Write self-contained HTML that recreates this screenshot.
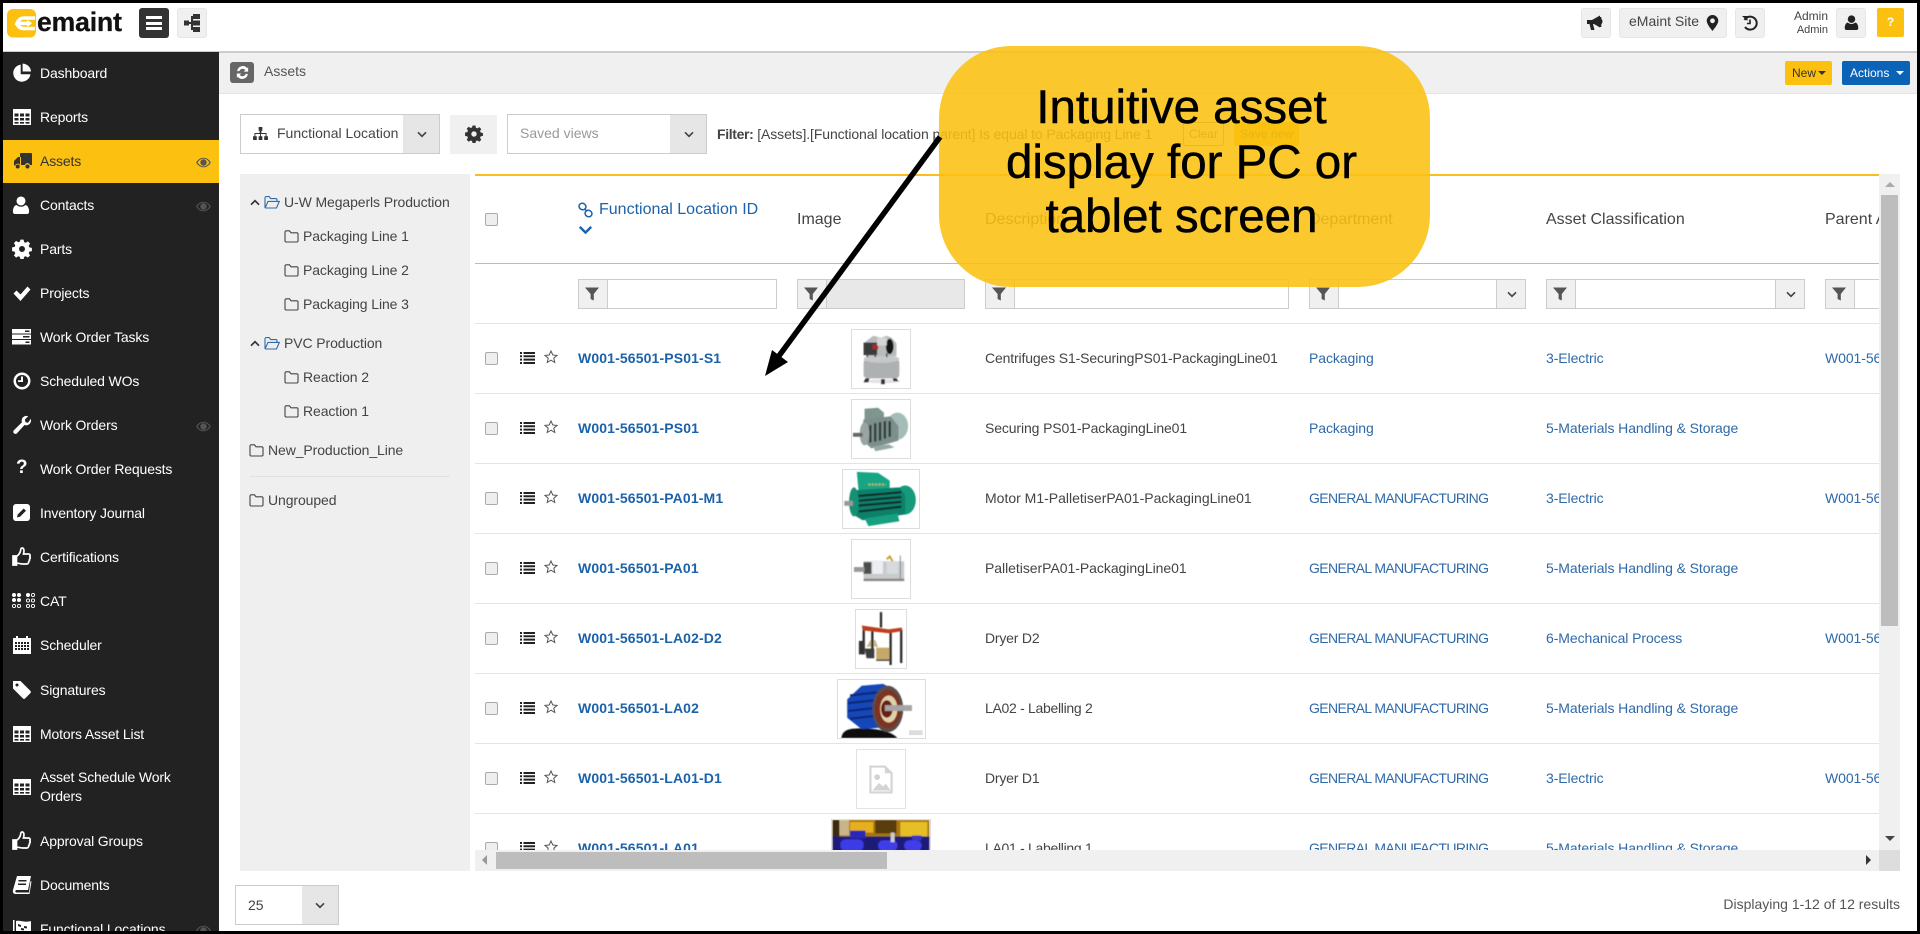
<!DOCTYPE html>
<html lang="en"><head><meta charset="utf-8"><title>Assets</title>
<style>
*{box-sizing:border-box}
html,body{margin:0;padding:0;width:1920px;height:934px;overflow:hidden;background:#fff;font-family:"Liberation Sans",sans-serif}
#p{position:relative;width:1920px;height:934px;overflow:hidden;background:#fff;color:#444;font-size:14px}
.a,.t,svg.i{position:absolute}
.t{white-space:nowrap;line-height:20px}
#side{position:absolute;left:3px;top:52px;width:216px;height:880px;background:#222;overflow:hidden}
.m{position:absolute;left:37px;color:#fff;line-height:20px;white-space:nowrap;letter-spacing:-.15px}
.mi{position:absolute;left:9px;width:20px;height:20px;color:#fff}
.eye{position:absolute;left:193px;width:15px;height:11px;color:#666}
.btn{position:absolute;top:8px;height:30px;background:#f0f0f0;border:1px solid #e6e6e6;border-radius:3px}
.sel{position:absolute;background:#fff;border:1px solid #ccc}
.sel b{position:absolute;right:0;top:0;bottom:0;width:36px;background:#e6e6e6}
.chev{position:absolute;width:10px;height:7px;color:#444}
.tree{color:#444;letter-spacing:-.1px}
.fo{position:absolute;width:15px;height:14px;color:#444}
.fb{position:absolute;top:279px;height:30px;border:1px solid #ccc;background:#fff}
.fb i{position:absolute;left:0;top:0;bottom:0;width:29px;background:#f0f0f0;border-right:1px solid #ccc}
.fb s{position:absolute;right:0;top:0;bottom:0;width:29px;background:#f0f0f0;border-left:1px solid #ccc}
.fi{position:absolute;top:286px;width:16px;height:16px;color:#555}
.l{position:absolute;left:475px;width:1404px;height:1px;background:#e4e4e4}
.cb{position:absolute;left:485px;width:13px;height:13px;background:#eee;border:1px solid #aaa;border-radius:2px}
.li{position:absolute;left:520px;width:15px;height:12px;color:#222}
.st{position:absolute;left:544px;width:14px;height:14px;color:#555}
.id{position:absolute;left:578px;font-weight:bold;color:#1b62ab;line-height:20px;white-space:nowrap;letter-spacing:.13px}
.d{position:absolute;left:985px;color:#444;line-height:20px;white-space:nowrap;letter-spacing:-.1px}
.lk{position:absolute;color:#2f69a8;line-height:20px;white-space:nowrap;letter-spacing:-.08px}
.g{letter-spacing:-.62px}
.th{position:absolute;background:#fff;border:1px solid #ddd;overflow:hidden}
.th svg{display:block;width:100%;height:100%}
</style></head><body>
<svg width="0" height="0" style="position:absolute">
<defs>
<filter id="bl" x="-5%" y="-5%" width="110%" height="110%"><feGaussianBlur stdDeviation=".45"/></filter>
<symbol id="pie" viewBox="0 0 20 20"><path d="M8.700 1.600A8.600 8.600 0 1 0 18.400 11.200H8.700z"/><path d="M10.600 0.600a8.600 8.600 0 0 1 8.400 7.900l-8.400 0z"/></symbol>
<symbol id="tbl" viewBox="0 0 20 18"><path fill-rule="evenodd" d="M1 1h18v16H1zM2.500 5.500v3h4v-3zM8 5.500v3h4v-3zM13.500 5.500v3h4v-3zM2.500 10v2.500h4V10zM8 10v2.500h4V10zM13.500 10v2.500h4V10zM2.500 14v1.600h4V14zM8 14v1.600h4V14zM13.500 14v1.600h4V14z"/></symbol>
<symbol id="trk" viewBox="0 0 20 18"><path fill-rule="evenodd" d="M7 2a1 1 0 0 1 1-1h10a1 1 0 0 1 1 1v11h-2.100a2.600 2.600 0 0 0-5 0H8V5H5L1 9v4.500h1.200a2.600 2.600 0 0 1 5 0H7z"/><circle cx="4.700" cy="14.500" r="2"/><circle cx="14.500" cy="14.500" r="2"/></symbol>
<symbol id="usr" viewBox="0 0 20 20"><circle cx="10" cy="5.500" r="5"/><path d="M3 20a2.500 2.500 0 0 1-2-2.500c0-4 1.500-7 4-7.500 1.500 1.300 3.200 2 5 2s3.500-.7 5-2c2.500.5 4 3.500 4 7.500a2.500 2.500 0 0 1-2 2.500z"/></symbol>
<symbol id="cog" viewBox="0 0 20 20"><path fill-rule="evenodd" d="M8.400 .6h3.200l.5 2.500 1.700.7 2.100-1.400 2.200 2.200-1.400 2.100.7 1.700 2.500.5v3.200l-2.500.5-.7 1.700 1.400 2.100-2.200 2.200-2.100-1.400-1.700.7-.5 2.500H8.400l-.5-2.500-1.700-.7-2.100 1.400-2.200-2.200 1.400-2.100-.7-1.700-2.500-.5V8.400l2.500-.5.7-1.700-1.400-2.100 2.200-2.200 2.100 1.400 1.700-.7zM10 7a3 3 0 1 0 0 6 3 3 0 0 0 0-6z"/></symbol>
<symbol id="chk" viewBox="0 0 20 20"><path d="M1.500 10.500l3-3 4 4 7-8 3 3-10 11.500z"/></symbol>
<symbol id="tsk" viewBox="0 0 20 16"><path fill-rule="evenodd" d="M0 0h19v4.500H0zM13 1.500v1.500h4.500V1.500zM0 5.500h19v4.500H0zM11 7v1.500h6.500V7zM0 11h19v4.500H0zM13.500 12.500V14h4v-1.500z"/></symbol>
<symbol id="clk" viewBox="0 0 20 20"><path fill-rule="evenodd" d="M10 1.500a8.500 8.500 0 1 1 0 17 8.500 8.500 0 0 1 0-17zM10 4a6 6 0 1 0 0 12 6 6 0 0 0 0-12zM9 5.500h2V11H6V9.300h3z"/></symbol>
<symbol id="wr" viewBox="0 0 20 20"><path d="M18.800 3.800c.7 2.800-.3 5-2.600 6.100-1.400.6-2.700.5-3.700.1L5 18.300a2.100 2.100 0 0 1-3.100-.1 2.100 2.100 0 0 1 0-3L10 7.300c-.5-1.100-.5-2.500.1-3.700C11.300 1.300 13.500.4 16.200 1.200L12.900 4.500l.6 2.700 2.600.6z"/></symbol>
<symbol id="pen" viewBox="0 0 20 20"><rect x="1" y="1" width="17" height="17" rx="3"/><path d="M5 14.500l.7-3 6-6 2.300 2.300-6 6z" fill="#222"/></symbol>
<symbol id="thu" viewBox="0 0 20 20"><path fill="none" stroke="currentColor" stroke-width="1.700" d="M1 9h3.500v9H1zM4.500 9.500c2-1.500 3.500-3.500 4-5.500.2-1.500.2-3 1.500-3 2 0 2.500 2.500 1.500 6h5c1.500 0 2 1.500 1.300 2.500.7 1 .4 2-.3 2.700.3 1-.2 2-.8 2.300.2 1.300-.7 2.500-2 2.500h-4c-2.500 0-4-.7-6.700-1.200"/><rect x="1" y="9" width="3.500" height="9"/></symbol>
<symbol id="cat" viewBox="0 0 24 16"><g fill="currentColor"><circle cx="2" cy="2" r="2"/><circle cx="7" cy="2" r="2"/><circle cx="2" cy="7" r="2"/><circle cx="7" cy="7" r="2"/><circle cx="16" cy="2" r="2"/></g><g fill="none" stroke="currentColor" stroke-width=".9"><circle cx="21" cy="2" r="1.600"/><circle cx="2" cy="13" r="1.600"/><circle cx="7" cy="13" r="1.600"/><circle cx="16" cy="7.500" r="1.600"/><circle cx="21" cy="7.500" r="1.600"/><circle cx="16" cy="13" r="1.600"/><circle cx="21" cy="13" r="1.600"/></g></symbol>
<symbol id="cal" viewBox="0 0 20 20"><path fill-rule="evenodd" d="M1 3h3V1h2v2h8V1h2v2h3v16H1zM3 7v2h2V7zM6 7v2h2V7zM9 7v2h2V7zM12 7v2h2V7zM15 7v2h2V7zM3 10v2h2v-2zM6 10v2h2v-2zM9 10v2h2v-2zM12 10v2h2v-2zM15 10v2h2v-2zM3 13v2h2v-2zM6 13v2h2v-2zM9 13v2h2v-2zM12 13v2h2v-2zM15 13v2h2v-2z"/></symbol>
<symbol id="tag" viewBox="0 0 20 20"><path fill-rule="evenodd" d="M1 1h7.500l10 10a1.500 1.500 0 0 1 0 2l-5.500 5.500a1.500 1.500 0 0 1-2 0L1 8.500zM5 3.500a1.500 1.500 0 1 0 0 3 1.500 1.500 0 0 0 0-3z"/></symbol>
<symbol id="bok" viewBox="0 0 20 20"><path fill-rule="evenodd" d="M5 1h14l-3 14H4.500c-1.500 0-1.500 2.500 0 2.500H17l1.500-11.500 1 .5L17.500 19H3.500C1 19 .5 16.500 1 15zM6.500 5v1.500h8V5zM6 8.500V10h8V8.500z"/></symbol>
<symbol id="flg" viewBox="0 0 20 20"><path fill-rule="evenodd" d="M1 1h1.500v18H1zM4 2c5-1 8 2 15 0v11c-7 2-10-1-15 0zM6 5v2l3 1V6zM12 7v2l3 .5v-2zM9 9v2l3 .5v-2z"/></symbol>
<symbol id="eye" viewBox="0 0 16 12"><path fill-rule="evenodd" d="M0 6C2 2.500 5 .8 8 .8S14 2.500 16 6c-2 3.500-5 5.200-8 5.200S2 9.500 0 6zM1.500 6C3.200 8.700 5.500 10.200 8 10.200S12.800 8.700 14.500 6C12.800 3.300 10.500 1.800 8 1.800S3.200 3.300 1.500 6zM8 2.500a3.500 3.500 0 1 1 0 7 3.500 3.500 0 0 1 0-7z"/></symbol>
<symbol id="ref" viewBox="0 0 16 16"><path d="M13 3.500A6 6 0 0 0 2.300 6.500h2.300A3.800 3.800 0 0 1 11 5.300L9.300 7H14V2.300zM3 12.500A6 6 0 0 0 13.700 9.500h-2.300A3.800 3.800 0 0 1 5 10.700L6.700 9H2v4.700z"/></symbol>
<symbol id="org" viewBox="0 0 16 14"><path d="M6 0h4v4H9v2.500h5.500V10H16v4h-4v-4h1.500V7.500H8.500V10H10v4H6v-4h1.500V7.500h-5V10H4v4H0v-4h1.500V6.500H7V4H6z"/></symbol>
<symbol id="chv" viewBox="0 0 10 7"><path d="M1 1.300l4 4 4-4" fill="none" stroke="currentColor" stroke-width="1.700"/></symbol>
<symbol id="fol" viewBox="0 0 15 14"><path d="M1 3a1.200 1.200 0 0 1 1.200-1.200h3.300l1.500 2h5.800A1.200 1.200 0 0 1 14 5v6.800a1.200 1.200 0 0 1-1.200 1.200H2.200A1.200 1.200 0 0 1 1 11.800z" fill="none" stroke="currentColor" stroke-width="1.100"/></symbol>
<symbol id="fop" viewBox="0 0 16 14"><path d="M1 12.500V2.800A1.200 1.200 0 0 1 2.200 1.600h3l1.500 2h5.100a1.200 1.200 0 0 1 1.200 1.200v1.600M1.200 12.700L4 6.400h11.300l-2.800 6.600H1.700z" fill="none" stroke="currentColor" stroke-width="1.100"/></symbol>
<symbol id="fun" viewBox="0 0 16 16"><path d="M1 1.500h14L9.800 8v6.500L6.600 13V8z"/></symbol>
<symbol id="lst" viewBox="0 0 15 12"><path d="M0 0h2v2H0zM3.500 0H15v2H3.500zM0 3.300h2v2H0zM3.500 3.300H15v2H3.500zM0 6.600h2v2H0zM3.500 6.600H15v2H3.500zM0 10h2v2H0zM3.500 10H15v2H3.500z"/></symbol>
<symbol id="str" viewBox="0 0 14 14"><path d="M7 1l1.800 4 4.200.4-3.200 2.800 1 4.300L7 10.200 3.200 12.500l1-4.300L1 5.400l4.200-.4z" fill="none" stroke="currentColor" stroke-width="1"/></symbol>
</defs></svg>

<div id="p">
<!-- top bar -->
<div class="a" style="left:3px;top:51px;width:1914px;height:2px;background:#ccc"></div>
<svg class="i" style="left:7px;top:9px;width:29px;height:29px" viewBox="0 0 29 29"><rect width="29" height="28.500" rx="6" fill="#fcc010"/><path d="M28 9H17c-3.500 0-6 2.200-7 5.300h13.500M10 14.300c1 3.200 3.500 5.200 7 5.200h11" fill="none" stroke="#fff" stroke-width="3.600"/><path d="M20 10.800l5 3.500-5 3.500z" fill="#fff"/></svg>
<div class="t" style="left:37px;top:8px;font-size:26.500px;font-weight:bold;color:#111;line-height:28px;-webkit-text-stroke:.3px #111;letter-spacing:-.1px">emaint</div>
<div class="a" style="left:139px;top:8px;width:30px;height:30px;background:#333;border-radius:3px"></div>
<div class="a" style="left:146px;top:16px;width:16px;height:3px;background:#fff"></div>
<div class="a" style="left:146px;top:21.500px;width:16px;height:3px;background:#fff"></div>
<div class="a" style="left:146px;top:27px;width:16px;height:3px;background:#fff"></div>
<div class="btn" style="left:177px;width:30px"></div>
<svg class="i" style="left:184px;top:14px;width:16px;height:18px" viewBox="0 0 16 18" fill="#333"><rect x="0" y="6.500" width="5" height="5"/><rect x="9" y="0" width="7" height="5"/><rect x="9" y="6.500" width="7" height="5"/><rect x="9" y="13" width="7" height="5"/><rect x="7" y="2" width="2" height="14"/><rect x="4" y="8" width="4" height="2"/></svg>

<div class="btn" style="left:1581px;width:30px"></div>
<svg class="i" style="left:1587px;top:15px;width:18px;height:16px" viewBox="0 0 18 16" fill="#222"><path d="M0 5h5l8-4.500V3c1.500.5 2.500 2 2.500 3.500S14.500 9.500 13 10v2.500L7 9H6l1.500 6H4L2.500 9H0z"/><path d="M13 2h1.300v10H13z"/></svg>
<div class="btn" style="left:1619px;width:108px"></div>
<div class="t" style="left:1629px;top:11px;color:#444">eMaint Site</div>
<svg class="i" style="left:1706px;top:15px;width:13px;height:16px" viewBox="0 0 13 16"><path fill="#222" fill-rule="evenodd" d="M6.500 0a5.800 5.800 0 0 1 5.800 5.800c0 2.700-3 6.800-5.800 10.200C3.700 12.600.7 8.500.7 5.800A5.800 5.800 0 0 1 6.500 0zm0 3.400a2.400 2.400 0 1 0 0 4.800 2.400 2.400 0 0 0 0-4.800z"/></svg>
<div class="btn" style="left:1735px;width:30px"></div>
<svg class="i" style="left:1742px;top:15px;width:16px;height:16px" viewBox="0 0 16 16"><path d="M2.500 5A6.500 6.500 0 1 1 3 12" fill="none" stroke="#222" stroke-width="2"/><path d="M0 1h5.500v5z" fill="#222"/><path d="M8 4.500V8.500H5" fill="none" stroke="#222" stroke-width="1.600"/></svg>
<div class="t" style="left:1778px;width:50px;text-align:right;top:6px;font-size:12px;color:#444">Admin</div>
<div class="t" style="left:1778px;width:50px;text-align:right;top:20px;font-size:11px;color:#444">Admin</div>
<div class="btn" style="left:1836px;width:30px"></div>
<svg class="i" style="left:1844px;top:14px;width:15px;height:17px;color:#222;fill:#222"><use href="#usr"/></svg>
<div class="a" style="left:1877px;top:8px;width:27px;height:29px;background:#fcc010;border-radius:2px;color:#fff;font-weight:bold;font-size:12px;text-align:center;line-height:29px">?</div>

<!-- sidebar -->
<div id="side">
<svg class="mi" style="top:11px;fill:#fff"><use href="#pie"/></svg><div class="m" style="top:11px">Dashboard</div>
<svg class="mi" style="top:55px;fill:#fff"><use href="#tbl"/></svg><div class="m" style="top:55px">Reports</div>
<div class="a" style="left:0;top:88px;width:216px;height:43px;background:#fcc010"></div>
<svg class="mi" style="top:99px;left:10px;fill:#333"><use href="#trk"/></svg><div class="m" style="top:99px;color:#333">Assets</div>
<svg class="eye" style="top:105px;color:#555;fill:#555"><use href="#eye"/></svg>
<svg class="mi" style="top:143px;left:9px;width:18px;fill:#fff"><use href="#usr"/></svg><div class="m" style="top:143px">Contacts</div>
<svg class="eye" style="top:149px;fill:#555"><use href="#eye"/></svg>
<svg class="mi" style="top:187px;fill:#fff"><use href="#cog"/></svg><div class="m" style="top:187px">Parts</div>
<svg class="mi" style="top:231px;fill:#fff"><use href="#chk"/></svg><div class="m" style="top:231px">Projects</div>
<svg class="mi" style="top:275px;fill:#fff"><use href="#tsk"/></svg><div class="m" style="top:275px">Work Order Tasks</div>
<svg class="mi" style="top:319px;fill:#fff"><use href="#clk"/></svg><div class="m" style="top:319px">Scheduled WOs</div>
<svg class="mi" style="top:363px;fill:#fff"><use href="#wr"/></svg><div class="m" style="top:363px">Work Orders</div>
<svg class="eye" style="top:369px;fill:#555"><use href="#eye"/></svg>
<div class="a" style="left:13px;top:405px;color:#fff;font-size:19px;font-weight:bold;line-height:22px">?</div><div class="m" style="top:407px">Work Order Requests</div>
<svg class="mi" style="top:451px;fill:#fff"><use href="#pen"/></svg><div class="m" style="top:451px">Inventory Journal</div>
<svg class="mi" style="top:495px;fill:#fff"><use href="#thu"/></svg><div class="m" style="top:495px">Certifications</div>
<svg class="a" style="left:9px;top:541px;width:24px;height:16px;color:#fff"><use href="#cat"/></svg><div class="m" style="top:539px">CAT</div>
<svg class="mi" style="top:583px;fill:#fff"><use href="#cal"/></svg><div class="m" style="top:583px">Scheduler</div>
<svg class="mi" style="top:628px;fill:#fff"><use href="#tag"/></svg><div class="m" style="top:628px">Signatures</div>
<svg class="mi" style="top:672px;fill:#fff"><use href="#tbl"/></svg><div class="m" style="top:672px">Motors Asset List</div>
<svg class="mi" style="top:725px;fill:#fff"><use href="#tbl"/></svg>
<div class="m" style="top:716px;line-height:19px;width:170px;white-space:normal">Asset Schedule Work Orders</div>
<svg class="mi" style="top:779px;fill:#fff"><use href="#thu"/></svg><div class="m" style="top:779px">Approval Groups</div>
<svg class="mi" style="top:823px;fill:#fff"><use href="#bok"/></svg><div class="m" style="top:823px">Documents</div>
<svg class="mi" style="top:867px;fill:#fff"><use href="#flg"/></svg><div class="m" style="top:867px">Functional Locations</div>
<svg class="eye" style="top:873px;fill:#555"><use href="#eye"/></svg>
</div>

<!-- band -->
<div class="a" style="left:219px;top:53px;width:1698px;height:41px;background:#f0f0f0;border-bottom:1px solid #e4e4e4"></div>
<div class="a" style="left:230px;top:62px;width:24px;height:21px;background:#666;border-radius:3px"></div>
<svg class="i" style="left:235px;top:65px;width:15px;height:15px;fill:#fff"><use href="#ref"/></svg>
<div class="t" style="left:264px;top:61px;color:#555">Assets</div>
<div class="a" style="left:1785px;top:61px;width:47px;height:24px;background:#fcc010;border-radius:2px"></div>
<div class="t" style="left:1792px;top:63px;font-size:12px;color:#333">New</div>
<div class="a" style="left:1818px;top:71px;border:4px solid transparent;border-top:4px solid #333;border-bottom:0"></div>
<div class="a" style="left:1842px;top:61px;width:68px;height:24px;background:#0b63b8;border-radius:2px"></div>
<div class="t" style="left:1850px;top:63px;font-size:12px;color:#fff">Actions</div>
<div class="a" style="left:1896px;top:71px;border:4px solid transparent;border-top:4px solid #fff;border-bottom:0"></div>

<!-- toolbar -->
<div class="sel" style="left:240px;top:114px;width:200px;height:40px"><b></b></div>
<svg class="i" style="left:253px;top:127px;width:15px;height:13px;fill:#333"><use href="#org"/></svg>
<div class="t" style="left:277px;top:123px;color:#444">Functional Location</div>
<svg class="chev" style="left:417px;top:131px"><use href="#chv"/></svg>
<div class="a" style="left:450px;top:115px;width:47px;height:39px;background:#f0f0f0"></div>
<svg class="i" style="left:465px;top:125px;width:18px;height:18px;fill:#333"><use href="#cog"/></svg>
<div class="sel" style="left:507px;top:114px;width:200px;height:40px"><b></b></div>
<div class="t" style="left:520px;top:123px;color:#999">Saved views</div>
<svg class="chev" style="left:684px;top:131px"><use href="#chv"/></svg>
<div class="t" style="left:717px;top:124px;color:#444;letter-spacing:-.1px"><b style="letter-spacing:-.35px">Filter:</b> [Assets].[Functional location parent] Is equal to Packaging Line 1</div>
<div class="a" style="left:1183px;top:122px;width:41px;height:24px;border:1px solid #8a8060;border-radius:2px;color:#555;font-size:12px;text-align:center;line-height:22px">Clear</div>
<div class="a" style="left:1234px;top:122px;width:65px;height:24px;background:#fcc010;border-radius:2px;color:#555;font-size:12px;text-align:center;line-height:24px">Save new</div>

<!-- tree -->
<div class="a" style="left:240px;top:174px;width:230px;height:697px;background:#efefef"></div>
<svg class="chev" style="left:250px;top:199px;transform:scaleY(-1);color:#333"><use href="#chv"/></svg>
<svg class="fo" style="left:264px;top:195px;width:16px;color:#2f69a8"><use href="#fop"/></svg>
<div class="t tree" style="left:284px;top:192px">U-W Megaperls Production</div>
<svg class="fo" style="left:284px;top:229px"><use href="#fol"/></svg><div class="t tree" style="left:303px;top:226px">Packaging Line 1</div>
<svg class="fo" style="left:284px;top:263px"><use href="#fol"/></svg><div class="t tree" style="left:303px;top:260px">Packaging Line 2</div>
<svg class="fo" style="left:284px;top:297px"><use href="#fol"/></svg><div class="t tree" style="left:303px;top:294px">Packaging Line 3</div>
<svg class="chev" style="left:250px;top:340px;transform:scaleY(-1);color:#333"><use href="#chv"/></svg>
<svg class="fo" style="left:264px;top:336px;width:16px;color:#2f69a8"><use href="#fop"/></svg>
<div class="t tree" style="left:284px;top:333px">PVC Production</div>
<svg class="fo" style="left:284px;top:370px"><use href="#fol"/></svg><div class="t tree" style="left:303px;top:367px">Reaction 2</div>
<svg class="fo" style="left:284px;top:404px"><use href="#fol"/></svg><div class="t tree" style="left:303px;top:401px">Reaction 1</div>
<svg class="fo" style="left:249px;top:443px"><use href="#fol"/></svg><div class="t tree" style="left:268px;top:440px">New_Production_Line</div>
<div class="a" style="left:250px;top:476px;width:200px;height:1px;background:#e0e0e0"></div>
<svg class="fo" style="left:249px;top:493px"><use href="#fol"/></svg><div class="t tree" style="left:268px;top:490px">Ungrouped</div>

<!-- table -->
<div class="a" style="left:475px;top:174px;width:1404px;height:2px;background:#f9bd1f"></div>
<div id="tb" class="a" style="left:0;top:0;width:1879px;height:850px;overflow:hidden;clip-path:inset(176px 0 0 475px)">
<div class="cb" style="top:213px"></div>
<svg class="i" style="left:578px;top:202px;width:15px;height:16px" viewBox="0 0 15 16" fill="none" stroke="#1b62ab" stroke-width="1.500"><ellipse cx="4.500" cy="4.500" rx="3.500" ry="3.200" transform="rotate(30 4.500 4.500)"/><ellipse cx="10.500" cy="11.500" rx="3.500" ry="3.200" transform="rotate(30 10.500 11.500)"/><path d="M6.500 6.500l2.500 3"/></svg>
<div class="t" style="left:599px;top:200px;font-size:16px;color:#1b62ab">Functional Location ID</div>
<svg class="i" style="left:578px;top:225px;width:15px;height:10px;color:#1b62ab"><use href="#chv"/></svg>
<div class="t" style="left:797px;top:210px;font-size:16px;color:#444">Image</div>
<div class="t" style="left:985px;top:210px;font-size:16px;color:#444">Description</div>
<div class="t" style="left:1309px;top:210px;font-size:16px;color:#444">Department</div>
<div class="t" style="left:1546px;top:210px;font-size:16px;color:#444">Asset Classification</div>
<div class="t" style="left:1825px;top:210px;font-size:16px;color:#444">Parent Asset</div>
<div class="l" style="top:263px;background:#bbb"></div>

<div class="fb" style="left:578px;width:199px"><i></i></div><svg class="fi" style="left:584px;fill:#555"><use href="#fun"/></svg>
<div class="fb" style="left:797px;width:168px;background:#e8e8e8"><i></i></div><svg class="fi" style="left:803px;fill:#555"><use href="#fun"/></svg>
<div class="fb" style="left:985px;width:304px"><i></i></div><svg class="fi" style="left:991px;fill:#555"><use href="#fun"/></svg>
<div class="fb" style="left:1309px;width:217px"><i></i><s></s></div><svg class="fi" style="left:1315px;fill:#555"><use href="#fun"/></svg><svg class="chev" style="left:1507px;top:291px"><use href="#chv"/></svg>
<div class="fb" style="left:1546px;width:259px"><i></i><s></s></div><svg class="fi" style="left:1552px;fill:#555"><use href="#fun"/></svg><svg class="chev" style="left:1786px;top:291px"><use href="#chv"/></svg>
<div class="fb" style="left:1825px;width:200px"><i></i></div><svg class="fi" style="left:1831px;fill:#555"><use href="#fun"/></svg>

<div class="l" style="top:323px"></div>
<div class="l" style="top:393px"></div>
<div class="l" style="top:463px"></div>
<div class="l" style="top:533px"></div>
<div class="l" style="top:603px"></div>
<div class="l" style="top:673px"></div>
<div class="l" style="top:743px"></div>
<div class="l" style="top:813px"></div>

<!-- row 1 -->
<div class="cb" style="top:352px"></div><svg class="li" style="top:352px;fill:#222"><use href="#lst"/></svg><svg class="st" style="top:350px"><use href="#str"/></svg>
<div class="id" style="top:348px">W001-56501-PS01-S1</div>
<div class="d" style="top:348px;letter-spacing:-.14px">Centrifuges S1-SecuringPS01-PackagingLine01</div>
<div class="lk" style="left:1309px;top:348px">Packaging</div><div class="lk" style="left:1546px;top:348px">3-Electric</div><div class="lk" style="left:1825px;top:348px">W001-56501-PS01</div>
<div class="th" style="left:851px;top:329px;width:60px;height:60px"><svg viewBox="0 0 60 60"><g filter="url(#bl)"><ellipse cx="32" cy="53" rx="18" ry="2" fill="#e2e2e2"/><rect x="12" y="30" width="37" height="20" rx="4" fill="#aeb1b1"/><ellipse cx="30.500" cy="30" rx="18.500" ry="4" fill="#c6c9c9"/><path d="M14 50h4l-1 4h-5zM30 51h4v5h-4zM42 50h4l2 3h-5z" fill="#333"/><path d="M14 27V12l8-6 8 2 6-2 5 2 5 6v13z" fill="#b8bcbc"/><rect x="12" y="13" width="14" height="13" fill="#3a3a3a"/><rect x="21" y="15" width="6" height="5" fill="#a82a2a"/><ellipse cx="39" cy="17" rx="4" ry="8" fill="#151515"/><rect x="26" y="8" width="10" height="8" fill="#d4d6d6"/><path d="M16 28v-4M24 28v-4M36 28v-4" stroke="#444" stroke-width="1.500"/></g></svg></div>
<!-- row 2 -->
<div class="cb" style="top:422px"></div><svg class="li" style="top:422px;fill:#222"><use href="#lst"/></svg><svg class="st" style="top:420px"><use href="#str"/></svg>
<div class="id" style="top:418px">W001-56501-PS01</div>
<div class="d" style="top:418px;letter-spacing:-.12px">Securing PS01-PackagingLine01</div>
<div class="lk" style="left:1309px;top:418px">Packaging</div><div class="lk" style="left:1546px;top:418px">5-Materials Handling &amp; Storage</div>
<div class="th" style="left:851px;top:399px;width:60px;height:60px"><svg viewBox="0 0 60 60"><g filter="url(#bl)"><path d="M13 9l14-1 6 5v10H13z" fill="#7f9590"/><ellipse cx="47" cy="27" rx="11" ry="14" fill="#a4bcb7"/><path d="M12 20l28-3 8 10v15L20 50 9 40z" fill="#7c8f8b"/><path d="M19 26v18M24 24v19M29 23v19M34 22v18M39 22v16" stroke="#2f3b39" stroke-width="2.400"/><ellipse cx="13" cy="35" rx="5" ry="12" fill="#99a5a1"/><rect x="1" y="34" width="10" height="4" fill="#666"/><path d="M22 48l16-2 6 3-20 4z" fill="#97a7a2"/></g></svg></div>
<!-- row 3 -->
<div class="cb" style="top:492px"></div><svg class="li" style="top:492px;fill:#222"><use href="#lst"/></svg><svg class="st" style="top:490px"><use href="#str"/></svg>
<div class="id" style="top:488px">W001-56501-PA01-M1</div>
<div class="d" style="top:488px;letter-spacing:0">Motor M1-PalletiserPA01-PackagingLine01</div>
<div class="lk g" style="left:1309px;top:488px">GENERAL MANUFACTURING</div><div class="lk" style="left:1546px;top:488px">3-Electric</div><div class="lk" style="left:1825px;top:488px">W001-56501-PA01</div>
<div class="th" style="left:842px;top:469px;width:78px;height:60px"><svg viewBox="0 0 78 60"><g filter="url(#bl)"><path d="M14 2l22 1 12 8v10l-32 3z" fill="#12a585"/><path d="M26 15h18" stroke="#c2b060" stroke-width="2" stroke-dasharray="2 1.500"/><ellipse cx="64" cy="31" rx="11" ry="15" fill="#139a7b"/><path d="M12 21l46-3 6 8v20l-44 6-10-6z" fill="#0e806a"/><path d="M14 27l46-4M14 32l46-4M14 37l46-4M16 43l44-5" stroke="#0a2e2a" stroke-width="2.300"/><ellipse cx="11" cy="33" rx="5" ry="15" fill="#129072"/><rect x="1" y="32" width="9" height="5" fill="#999"/><path d="M22 50l34-5 2 8-32 5z" fill="#12a080"/></g></svg></div>
<!-- row 4 -->
<div class="cb" style="top:562px"></div><svg class="li" style="top:562px;fill:#222"><use href="#lst"/></svg><svg class="st" style="top:560px"><use href="#str"/></svg>
<div class="id" style="top:558px">W001-56501-PA01</div>
<div class="d" style="top:558px;letter-spacing:-.04px">PalletiserPA01-PackagingLine01</div>
<div class="lk g" style="left:1309px;top:558px">GENERAL MANUFACTURING</div><div class="lk" style="left:1546px;top:558px">5-Materials Handling &amp; Storage</div>
<div class="th" style="left:851px;top:539px;width:60px;height:60px"><svg viewBox="0 0 60 60"><g filter="url(#bl)"><rect x="12" y="22" width="42" height="19" fill="#c8cbcc"/><rect x="21" y="21" width="11" height="14" fill="#eceef2"/><rect x="36" y="22" width="12" height="13" fill="#d8dade"/><rect x="12" y="23" width="8" height="12" fill="#4e4e4e"/><rect x="2" y="28" width="11" height="5" fill="#9a9a9a"/><rect x="12" y="40" width="42" height="2.500" fill="#888"/><path d="M36 20l3-3 3 5" fill="none" stroke="#c8a030" stroke-width="2"/><path d="M50 16v25" stroke="#888" stroke-width="1"/></g></svg></div>
<!-- row 5 -->
<div class="cb" style="top:632px"></div><svg class="li" style="top:632px;fill:#222"><use href="#lst"/></svg><svg class="st" style="top:630px"><use href="#str"/></svg>
<div class="id" style="top:628px">W001-56501-LA02-D2</div>
<div class="d" style="top:628px;letter-spacing:-.2px">Dryer D2</div>
<div class="lk g" style="left:1309px;top:628px">GENERAL MANUFACTURING</div><div class="lk" style="left:1546px;top:628px">6-Mechanical Process</div><div class="lk" style="left:1825px;top:628px">W001-56501-LA02</div>
<div class="th" style="left:855px;top:609px;width:52px;height:60px"><svg viewBox="0 0 52 60"><g filter="url(#bl)"><rect x="21" y="39" width="15" height="13" fill="#c6a868"/><path d="M11 38l4-7h5l3 7z" fill="#c9b58a"/><path d="M8 18v28M36 20v37M47 20v35M26 2v16M17 22v20" stroke="#2a2a2a" stroke-width="2.400"/><path d="M6 16l28 4 14-2-1 4-13 2-27-3z" fill="#bd3c1c"/><path d="M3 32h6v14H3z" fill="#333"/><path d="M9 40l10 0v10h-8z" fill="#3c3c3c"/><path d="M21 52h15" stroke="#444" stroke-width="1.500"/></g></svg></div>
<!-- row 6 -->
<div class="cb" style="top:702px"></div><svg class="li" style="top:702px;fill:#222"><use href="#lst"/></svg><svg class="st" style="top:700px"><use href="#str"/></svg>
<div class="id" style="top:698px">W001-56501-LA02</div>
<div class="d" style="top:698px;letter-spacing:-.3px">LA02 - Labelling 2</div>
<div class="lk g" style="left:1309px;top:698px">GENERAL MANUFACTURING</div><div class="lk" style="left:1546px;top:698px">5-Materials Handling &amp; Storage</div>
<div class="th" style="left:837px;top:679px;width:89px;height:60px"><svg viewBox="0 0 89 60"><g filter="url(#bl)"><path d="M3 60c1-8 7-10 20-10 14 0 30 2 38 10z" fill="#0b0b0b"/><path d="M24 6l22-2 12 6v38l-34 3-15-12V20z" fill="#1447b8"/><path d="M12 16l36-4M10 24l36-4M10 32l36-4M12 40l36-4" stroke="#0a2778" stroke-width="2.200"/><ellipse cx="51" cy="30" rx="16" ry="24" fill="#5a4e4a"/><ellipse cx="51" cy="30" rx="13.500" ry="20" fill="#7d3324"/><ellipse cx="52" cy="30" rx="9" ry="14" fill="#e0d2a8"/><ellipse cx="50" cy="30" rx="6" ry="9" fill="#6b1f18"/><rect x="48" y="26" width="28" height="6" fill="#a5a5a5"/></g><rect x="73" y="52" width="14" height="5" fill="#ddd"/></svg></div>
<!-- row 7 -->
<div class="cb" style="top:772px"></div><svg class="li" style="top:772px;fill:#222"><use href="#lst"/></svg><svg class="st" style="top:770px"><use href="#str"/></svg>
<div class="id" style="top:768px">W001-56501-LA01-D1</div>
<div class="d" style="top:768px;letter-spacing:-.2px">Dryer D1</div>
<div class="lk g" style="left:1309px;top:768px">GENERAL MANUFACTURING</div><div class="lk" style="left:1546px;top:768px">3-Electric</div><div class="lk" style="left:1825px;top:768px">W001-56501-LA01</div>
<div class="th" style="left:856px;top:749px;width:50px;height:60px;border-color:#e2e2e2"><svg viewBox="0 0 50 60"><path d="M14 17h15l7 7v20H14z" fill="none" stroke="#d4d4d4" stroke-width="2.200"/><path d="M29 17v7h7z" fill="#d4d4d4"/><circle cx="21" cy="28" r="3" fill="#d4d4d4"/><path d="M16 42l7-8 4 4 3-3 5 7z" fill="#d4d4d4"/></svg></div>
<!-- row 8 -->
<div class="cb" style="top:842px"></div><svg class="li" style="top:842px;fill:#222"><use href="#lst"/></svg><svg class="st" style="top:840px"><use href="#str"/></svg>
<div class="id" style="top:838px">W001-56501-LA01</div>
<div class="d" style="top:838px;letter-spacing:-.3px">LA01 - Labelling 1</div>
<div class="lk g" style="left:1309px;top:838px">GENERAL MANUFACTURING</div><div class="lk" style="left:1546px;top:838px">5-Materials Handling &amp; Storage</div>
<div class="th" style="left:831px;top:819px;width:100px;height:60px"><svg viewBox="0 0 100 60"><g filter="url(#bl)"><rect width="100" height="60" fill="#a8760a"/><rect x="0" y="0" width="7" height="20" fill="#3a2a10"/><rect x="7" y="0" width="10" height="16" fill="#c9b48a"/><rect x="18" y="2" width="24" height="11" fill="#e6b01c"/><rect x="44" y="0" width="22" height="14" fill="#5a3c08"/><rect x="70" y="2" width="28" height="16" fill="#e6be28"/><rect x="0" y="17" width="100" height="43" fill="#1c1a78"/><rect x="8" y="20" width="24" height="12" rx="5" fill="#3a3ae8"/><rect x="47" y="21" width="20" height="11" rx="5" fill="#3f3ce8"/><rect x="74" y="21" width="18" height="11" rx="5" fill="#3f3ce8"/><rect x="18" y="11" width="16" height="8" fill="#2a26b8"/><rect x="60" y="13" width="4" height="10" fill="#ccc"/><rect x="82" y="16" width="10" height="5" fill="#3a34c8"/></g></svg></div>
</div>

<!-- scrollbars -->
<div class="a" style="left:1879px;top:174px;width:21px;height:676px;background:#f0f0f0"></div>
<div class="a" style="left:1881px;top:195px;width:17px;height:431px;background:#bdbdbd"></div>
<div class="a" style="left:1885px;top:182px;border:5px solid transparent;border-bottom:5px solid #aaa;border-top:0"></div>
<div class="a" style="left:1885px;top:836px;border:5px solid transparent;border-top:5px solid #444;border-bottom:0"></div>
<div class="a" style="left:475px;top:850px;width:1404px;height:21px;background:#f0f0f0"></div>
<div class="a" style="left:1879px;top:850px;width:21px;height:21px;background:#ddd"></div>
<div class="a" style="left:496px;top:852px;width:391px;height:17px;background:#bdbdbd"></div>
<div class="a" style="left:482px;top:855px;border:5px solid transparent;border-right:5px solid #999;border-left:0"></div>
<div class="a" style="left:1866px;top:855px;border:5px solid transparent;border-left:5px solid #333;border-right:0"></div>

<!-- footer -->
<div class="sel" style="left:235px;top:885px;width:104px;height:40px"><b></b></div>
<div class="t" style="left:248px;top:895px;color:#444">25</div>
<svg class="chev" style="left:315px;top:902px"><use href="#chv"/></svg>
<div class="t" style="left:1600px;width:300px;text-align:right;top:894px;color:#555">Displaying 1-12 of 12 results</div>

<!-- callout -->
<div class="a" style="left:939px;top:46px;width:491px;height:241px;border-radius:72px;background:rgba(250,192,17,.88)"></div>
<div class="a" style="left:936px;top:81px;width:491px;text-align:center;font-size:47.500px;line-height:54.500px;color:#000;-webkit-text-stroke:.5px #000">Intuitive asset<br>display for PC or<br>tablet screen</div>
<svg class="a" style="left:0;top:0;width:1920px;height:934px;pointer-events:none" viewBox="0 0 1920 934"><path d="M940 137L773 364" stroke="#000" stroke-width="5.500" fill="none"/><path d="M765 376l7-26 16 12z" fill="#000"/></svg>

<!-- frame -->
<div class="a" style="left:0;top:0;width:1920px;height:3px;background:#000"></div>
<div class="a" style="left:0;top:931px;width:1920px;height:3px;background:#000"></div>
<div class="a" style="left:0;top:0;width:3px;height:934px;background:#000"></div>
<div class="a" style="left:1917px;top:0;width:3px;height:934px;background:#000"></div>
</div>
</body></html>
